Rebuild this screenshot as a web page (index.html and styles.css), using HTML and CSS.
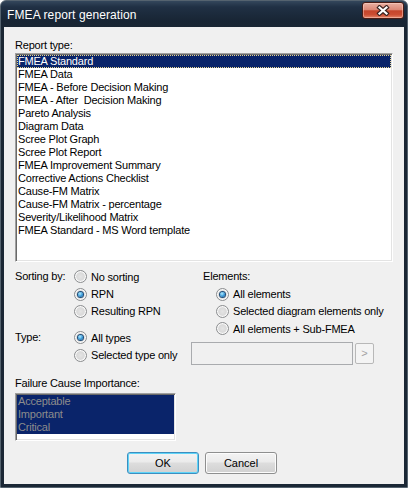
FILE: index.html
```html
<!DOCTYPE html>
<html>
<head>
<meta charset="utf-8">
<title>FMEA report generation</title>
<link rel="stylesheet" href="styles.css">
</head>
<body>
<div class="window">
  <div class="titlebar">
    <span class="title">FMEA report generation</span>
    <button class="close" aria-label="Close">
      <svg width="14" height="11" viewBox="0 0 14 11">
        <path d="M3.5 2.5 L10.5 8.5 M10.5 2.5 L3.5 8.5" stroke="#3a2320" stroke-width="4.4" stroke-linecap="square" fill="none"/>
        <path d="M3.5 2.5 L10.5 8.5 M10.5 2.5 L3.5 8.5" stroke="#ffffff" stroke-width="2.2" stroke-linecap="square" fill="none"/>
      </svg>
    </button>
  </div>
  <div class="client">
    <div class="label">Report type:</div>
    <div class="listbox reports">
      <div class="item selected focus">FMEA Standard</div>
      <div class="item">FMEA Data</div>
      <div class="item">FMEA - Before Decision Making</div>
      <div class="item">FMEA - After &nbsp;Decision Making</div>
      <div class="item">Pareto Analysis</div>
      <div class="item">Diagram Data</div>
      <div class="item">Scree Plot Graph</div>
      <div class="item">Scree Plot Report</div>
      <div class="item">FMEA Improvement Summary</div>
      <div class="item">Corrective Actions Checklist</div>
      <div class="item">Cause-FM Matrix</div>
      <div class="item">Cause-FM Matrix - percentage</div>
      <div class="item">Severity/Likelihood Matrix</div>
      <div class="item">FMEA Standard - MS Word template</div>
    </div>

    <div class="options">
      <div class="col-left">
        <div class="group">
          <div class="glabel">Sorting by:</div>
          <div class="radios">
            <div class="opt"><span class="radio"></span>No sorting</div>
            <div class="opt"><span class="radio on"></span>RPN</div>
            <div class="opt"><span class="radio"></span>Resulting RPN</div>
          </div>
        </div>
        <div class="group type">
          <div class="glabel">Type:</div>
          <div class="radios">
            <div class="opt"><span class="radio on"></span>All types</div>
            <div class="opt"><span class="radio"></span>Selected type only</div>
          </div>
        </div>
      </div>
      <div class="col-right">
        <div class="elements">
          <div class="glabel">Elements:</div>
          <div class="radios indent">
            <div class="opt"><span class="radio on"></span>All elements</div>
            <div class="opt"><span class="radio"></span>Selected diagram elements only</div>
            <div class="opt"><span class="radio"></span>All elements + Sub-FMEA</div>
          </div>
        </div>
        <div class="typefield">
          <div class="field"></div>
          <button class="more" disabled>&gt;</button>
        </div>
      </div>
    </div>

    <div class="label fci">Failure Cause Importance:</div>
    <div class="listbox importance">
      <div class="item selected dim">Acceptable</div>
      <div class="item selected dim">Important</div>
      <div class="item selected dim">Critical</div>
    </div>

    <div class="buttons">
      <button class="btn default">OK</button>
      <button class="btn">Cancel</button>
    </div>
  </div>
</div>
</body>
</html>
```

FILE: styles.css
```css
* { box-sizing: border-box; }

body {
  margin: 0;
  font-family: "Liberation Sans", Arial, sans-serif;
  font-size: 11px;
  letter-spacing: -0.2px;
  color: #000;
  background: #fff;
}

.window {
  width: 408px;
  height: 488px;
  border: 1px solid #55636f;
  border-radius: 6px 6px 0 0;
  background: linear-gradient(#34475c 0, #203044 6px, #182534 20px, #1a2633 27px, #1b2735 100%);
  padding: 0 3px 3px;
  display: flex;
  flex-direction: column;
}

.titlebar {
  height: 26px;
  display: flex;
  justify-content: space-between;
  align-items: flex-start;
  flex: none;
}

.title {
  color: #fff;
  font-size: 12px;
  letter-spacing: 0.1px;
  line-height: 14px;
  padding: 7px 0 0 3px;
}

.close {
  margin-top: 1px;
  width: 42px;
  height: 17px;
  padding: 0;
  border: 1px solid #4a1c14;
  border-radius: 3px;
  background: linear-gradient(#eab0a2 0%, #dc8876 45%, #c5452b 52%, #cc4e33 78%, #e5866a 100%);
  box-shadow: inset 0 0 0 1px rgba(255, 220, 210, 0.45);
  display: flex;
  align-items: center;
  justify-content: center;
}

.close svg { display: block; }

.client {
  flex: 1;
  background: #f0f0f0;
  padding: 12px 0 0 11px;
  display: flex;
  flex-direction: column;
}

.label {
  line-height: 13px;
  height: 13px;
}

.listbox {
  background: #fff;
  border: 1px solid;
  border-color: #a0a0a0 #ffffff #ffffff #a0a0a0;
  box-shadow: inset 1px 1px 0 #696969, inset -1px -1px 0 #e3e3e3;
  padding: 1px;
}

.reports {
  margin-top: 1px;
  width: 378px;
  height: 209px;
}

.item {
  height: 13px;
  line-height: 13px;
  padding-left: 1px;
  white-space: nowrap;
}

.item.selected {
  background: #0a246a;
  color: #fff;
}

.item.focus {
  border: 1px dotted #e6d48e;
  line-height: 11px;
  padding-left: 0;
}

.item.dim {
  color: #8c8c8c;
}

.options {
  margin-top: 6px;
  display: flex;
}

.col-left {
  width: 176px;
  flex: none;
}

.group {
  display: flex;
}

.group.type {
  margin-top: 9px;
}

.glabel {
  width: 59px;
  line-height: 17.4px;
  height: 17.4px;
  flex: none;
}

.opt {
  display: flex;
  align-items: center;
  height: 17.4px;
  white-space: nowrap;
}

.radio {
  width: 13px;
  height: 13px;
  flex: none;
  margin-right: 4px;
  border-radius: 50%;
  border: 1px solid #8b8d8f;
  background: radial-gradient(circle at 50% 50%, #e4e4e4 0, #dadada 45%, #f4f4f4 90%);
  box-shadow: inset 0 0 0 1px #fafafa;
  display: flex;
  align-items: center;
  justify-content: center;
}

.radio.on::after {
  content: "";
  width: 5px;
  height: 5px;
  border-radius: 50%;
  background: radial-gradient(circle at 40% 35%, #b4eeff 0, #3597d8 55%, #114f8c 100%);
  box-shadow: 0 0 0 1px #1f4d78;
}

.col-right {
  flex: 1;
}

.elements {
  padding-left: 12px;
}

.elements .glabel {
  width: auto;
}

.radios.indent {
  padding-left: 13px;
}

.typefield {
  margin-top: 4.4px;
  display: flex;
  align-items: center;
  gap: 2px;
}

.field {
  width: 162px;
  height: 23px;
  border: 1px solid #a9abae;
  background: #f0f0f0;
}

.more {
  width: 19px;
  height: 21px;
  padding: 0;
  border: 1px solid #b8b8b8;
  border-radius: 2px;
  background: #f4f4f4;
  color: #a3a3a3;
  font-family: "Liberation Sans", Arial, sans-serif;
  font-size: 11px;
}

.fci {
  margin-top: 12px;
}

.importance {
  margin-top: 3px;
  width: 161px;
  height: 48px;
}

.buttons {
  margin-top: 11px;
  padding-left: 112px;
  display: flex;
  gap: 6px;
}

.btn {
  width: 72px;
  height: 22px;
  padding: 0;
  font-family: "Liberation Sans", Arial, sans-serif;
  font-size: 11px;
  letter-spacing: 0;
  color: #000;
  border: 1px solid #8e8f8f;
  border-radius: 3px;
  background: linear-gradient(#f3f3f3 0%, #ebebeb 45%, #dddddd 50%, #d1d1d1 100%);
  box-shadow: inset 0 0 0 1px #fcfcfc;
}

.btn.default {
  border-color: #3c8fc0;
  box-shadow: inset 0 0 0 1px #5fd4f8;
}
```
